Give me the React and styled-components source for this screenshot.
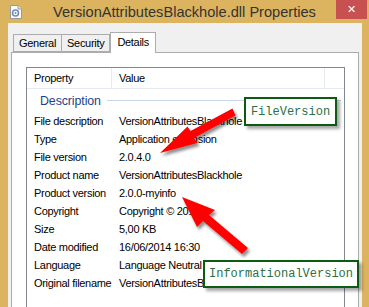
import styled, { createGlobalStyle } from "styled-components";

const GlobalStyle = createGlobalStyle`
  html, body {
    margin: 0;
    padding: 0;
    background: #dcb35e;
  }
  * {
    box-sizing: border-box;
  }
`;

const rows = [
  ["File description", "VersionAttributesBlackhole"],
  ["Type", "Application extension"],
  ["File version", "2.0.4.0"],
  ["Product name", "VersionAttributesBlackhole"],
  ["Product version", "2.0.0-myinfo"],
  ["Copyright", "Copyright \u00a9 2014"],
  ["Size", "5,00 KB"],
  ["Date modified", "16/06/2014 16:30"],
  ["Language", "Language Neutral"],
  ["Original filename", "VersionAttributesBlackhole.dll"],
];

const tabs = ["General", "Security", "Details"];

function DllIcon() {
  return (
    <svg width="12" height="14" viewBox="0 0 12 14">
      <path d="M0.5 0.5 H8 L11.5 4 V13.5 H0.5 Z" fill="#fdfdfd" stroke="#9a9a9a" />
      <path d="M8 0.5 V4 H11.5" fill="#e8e8e8" stroke="#9a9a9a" />
      <circle cx="5.5" cy="8" r="3" fill="none" stroke="#6d8fb0" strokeWidth="1.6" />
      <circle cx="5.5" cy="8" r="1" fill="#6d8fb0" />
    </svg>
  );
}

function Arrows() {
  return (
    <ArrowLayer width="369" height="307" viewBox="0 0 369 307">
      <defs>
        <filter id="shade" x="-20%" y="-20%" width="150%" height="150%">
          <feDropShadow dx="2" dy="3" stdDeviation="1.4" floodColor="#000" floodOpacity="0.45" />
        </filter>
      </defs>
      <polygon
        filter="url(#shade)"
        fill="#ff0000"
        points="160,153 187.5,126.5 190.5,131 232.5,108.5 235.5,115.5 194,138 197.5,143"
      />
      <polygon
        filter="url(#shade)"
        fill="#ff0000"
        points="182,197 215,210 209,215 248,248 242,254 203,221 197,227"
      />
    </ArrowLayer>
  );
}

export default function App() {
  return (
    <Window>
      <GlobalStyle />
      <TitleBar>
        <IconCell>
          <DllIcon />
        </IconCell>
        <Title>VersionAttributesBlackhole.dll Properties</Title>
        <CloseButton>{"\u2715"}</CloseButton>
      </TitleBar>
      <Client>
        <TabStrip>
          {tabs.map((t) => (
            <Tab key={t} $active={t === "Details"}>
              {t}
            </Tab>
          ))}
        </TabStrip>
        <Panel>
          <ListView>
            <Header>
              <HeaderCell>Property</HeaderCell>
              <HeaderCell>Value</HeaderCell>
              <HeaderCell />
            </Header>
            <Group>
              <GroupName>Description</GroupName>
              <GroupLine />
            </Group>
            {rows.map(([k, v]) => (
              <Row key={k}>
                <Cell>{k}</Cell>
                <Cell>{v}</Cell>
              </Row>
            ))}
          </ListView>
        </Panel>
      </Client>
      <Arrows />
      <Callout $left={244} $top={97} $width={93} $height={29}>
        FileVersion
      </Callout>
      <Callout $left={203} $top={260} $width={156} $height={28}>
        InformationalVersion
      </Callout>
    </Window>
  );
}

const Window = styled.div`
  position: relative;
  width: 369px;
  height: 307px;
  overflow: hidden;
  display: flex;
  flex-direction: column;
  background: #dcb35e;
  font-family: "Liberation Sans", Arial, sans-serif;
`;

const TitleBar = styled.div`
  height: 23px;
  flex: none;
  display: grid;
  grid-template-columns: 1fr auto 1fr;
  align-items: start;
`;

const IconCell = styled.div`
  padding: 5px 0 0 10px;
  line-height: 0;
`;

const Title = styled.div`
  font-size: 14.6px;
  line-height: 24px;
  color: #333;
  white-space: nowrap;
`;

const CloseButton = styled.div`
  justify-self: end;
  margin-right: 2px;
  width: 31px;
  height: 19px;
  background: #c75050;
  color: #fff;
  font-size: 11px;
  font-weight: bold;
  display: flex;
  align-items: center;
  justify-content: center;
  font-family: "DejaVu Sans", sans-serif;
`;

const Client = styled.div`
  flex: 1;
  margin: 0 7px 0 8px;
  padding: 9px 3px 0 3px;
  background: #f0f0f0;
  display: flex;
  flex-direction: column;
`;

const TabStrip = styled.div`
  height: 20px;
  display: flex;
  align-items: flex-end;
  padding-left: 2px;
  position: relative;
  z-index: 1;
`;

const Tab = styled.div`
  height: ${(p) => (p.$active ? "21px" : "18px")};
  margin-bottom: ${(p) => (p.$active ? "-1px" : "0")};
  margin-left: ${(p) => (p.$active ? "0" : "-1px")};
  padding: ${(p) => (p.$active ? "3px 6px 0" : "2px 5px 0")};
  border: 1px solid #acacac;
  border-bottom: ${(p) => (p.$active ? "none" : "1px solid #acacac")};
  background: ${(p) => (p.$active ? "#ffffff" : "#f0f0f0")};
  font-size: 11px;
  letter-spacing: -0.3px;
  color: #000;
  white-space: nowrap;
  &:first-child {
    margin-left: 0;
  }
`;

const Panel = styled.div`
  flex: 1;
  background: #fff;
  border: 1px solid #acacac;
  padding: 14px 13px 0 14px;
`;

const ListView = styled.div`
  height: 260px;
  border: 1px solid #828790;
  font-size: 11px;
  letter-spacing: -0.3px;
  color: #000;
`;

const Header = styled.div`
  display: grid;
  grid-template-columns: 85px 213px 1fr;
  height: 21px;
  border-bottom: 1px solid #e5eaf3;
`;

const HeaderCell = styled.div`
  padding: 4px 0 0 7px;
  border-right: 1px solid #e5eaf3;
  white-space: nowrap;
  &:last-child {
    border-right: none;
  }
`;

const Group = styled.div`
  height: 23px;
  display: flex;
  align-items: center;
  padding: 0 3px 0 13px;
`;

const GroupName = styled.span`
  color: #1e3e8c;
  font-size: 12.4px;
  letter-spacing: -0.1px;
`;

const GroupLine = styled.div`
  flex: 1;
  height: 1px;
  margin-left: 6px;
  background: #c9d6ea;
`;

const Row = styled.div`
  display: grid;
  grid-template-columns: 85px 1fr;
  height: 18px;
  align-items: center;
`;

const Cell = styled.div`
  padding-left: 7px;
  white-space: nowrap;
  overflow: hidden;
`;

const ArrowLayer = styled.svg`
  position: absolute;
  left: 0;
  top: 0;
  pointer-events: none;
`;

const Callout = styled.div`
  position: absolute;
  left: ${(p) => p.$left}px;
  top: ${(p) => p.$top}px;
  width: ${(p) => p.$width}px;
  height: ${(p) => p.$height}px;
  border: 2px solid #0b5c12;
  background: #fff;
  box-shadow: 3px 3px 3px rgba(0, 0, 0, 0.35);
  display: flex;
  align-items: center;
  justify-content: center;
  font-family: "Liberation Mono", "Courier New", monospace;
  font-size: 12px;
  color: #2a7048;
`;
